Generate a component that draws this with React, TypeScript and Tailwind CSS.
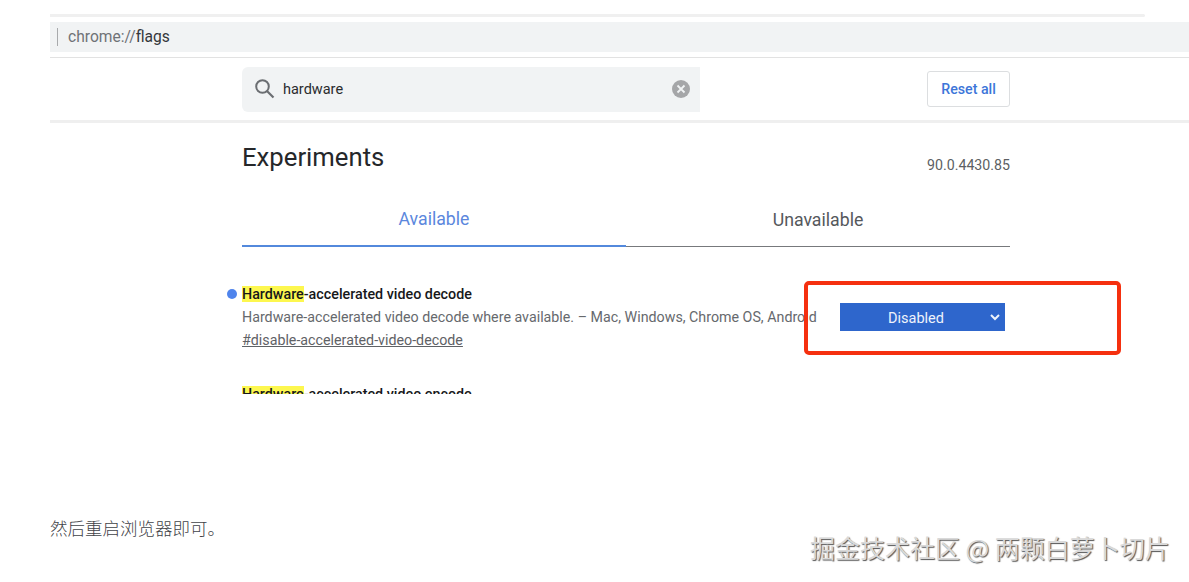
const rowLabel = "font-['Roboto','Liberation_Sans',sans-serif]"

const Highlight = () => <span className="bg-[#fdf74f]">Hardware</span>

export default function App() {
  return (
    <div className={`${rowLabel} relative flex h-[582px] w-[1189px] flex-col overflow-hidden bg-white pl-[50px] pt-[14px]`}>
      {/* browser chrome */}
      <div className="mr-[44px] h-[3px] rounded-r-full bg-[#f0f0f0]" />
      <div className="mt-[5px] flex h-[30px] items-center bg-[#f1f3f4] pl-[7px]">
        <div className="h-[18px] w-px bg-[#a8aaac]" />
        <span className="ml-[10px] pt-[2px] text-[15.6px] text-[#6f7276]">
          chrome://<span className="text-[#34373b]">flags</span>
        </span>
      </div>
      <div className="mt-[5px] h-px bg-[#e2e2e2]" />

      {/* search row */}
      <div className="flex h-[62px] items-center pl-[192px]">
        <div className="flex h-[45px] w-[458px] items-center rounded-l-md bg-[#f1f3f4] pl-[13px] pr-[10px]">
          <svg width="20" height="20" viewBox="0 0 20 20" fill="none" stroke="#6b6e72" strokeWidth="2">
            <circle cx="7.5" cy="7.5" r="6.3" />
            <path d="M12 12l6.5 6.5" strokeWidth="2.2" />
          </svg>
          <span className="ml-[8px] pt-[2px] text-[14.5px] text-[#2a2b2d]">hardware</span>
          <span className="ml-auto flex h-[18px] w-[18px] items-center justify-center rounded-full bg-[#a5a6a8]">
            <svg width="10" height="10" viewBox="0 0 10 10" fill="none" stroke="#f1f3f4" strokeWidth="1.8">
              <path d="M1.5 1.5l7 7M8.5 1.5l-7 7" />
            </svg>
          </span>
        </div>
        <button className="ml-[227px] h-[36px] w-[83px] rounded-[3px] border border-[#dcdee0] bg-white pt-[2px] text-[14.2px] font-medium text-[#3d76d9]">
          Reset all
        </button>
      </div>
      <div className="h-[3px] bg-[#efefef]" />

      {/* main column */}
      <div className="flex w-[960px] flex-col pl-[192px]">
        <div className="flex items-start justify-between pt-[18px]">
          <h1 className="text-[25.7px] leading-[32px] text-[#25272a]">Experiments</h1>
          <span className="pt-[14px] text-[14.2px] leading-[20px] text-[#5c5f63]">90.0.4430.85</span>
        </div>

        <div className="mt-[28px] flex">
          <div className="flex h-[44px] w-[384px] justify-center border-b-2 border-[#5389dc] pt-[4px] text-[17.7px] leading-[24px] text-[#5b87dd]">
            Available
          </div>
          <div className="flex h-[44px] w-[384px] justify-center border-b border-[#77797c] pt-[5px] text-[17.7px] leading-[24px] text-[#55585c]">
            Unavailable
          </div>
        </div>

        <div className="relative mt-[38px] h-[109px]">
          <span className="absolute left-[-15px] top-[4px] h-[10px] w-[10px] rounded-full bg-[#4f84ec]" />
          <div className="h-full overflow-hidden">
            <p className="text-[14.3px] font-medium leading-[18px] text-[#17181a]">
              <Highlight />-accelerated video decode
            </p>
            <p className="mt-[5px] whitespace-nowrap text-[14.25px] leading-[18px] text-[#66696d]">
              Hardware-accelerated video decode where available. – Mac, Windows, Chrome OS, Android
            </p>
            <a className="mt-[5px] block w-fit text-[14.25px] leading-[18px] text-[#5f6266] underline">
              #disable-accelerated-video-decode
            </a>
            <p className="mt-[36px] text-[14.3px] font-medium leading-[18px] text-[#17181a]">
              <Highlight />-accelerated video encode
            </p>
          </div>
        </div>
      </div>

      <p className="mt-[122px] font-['Noto_Sans_CJK_SC',sans-serif] text-[17.5px] font-light leading-[24px] text-[#3f4348]">
        然后重启浏览器即可。
      </p>

      {/* dropdown sits across the description's end */}
      <div className="absolute left-[840px] top-[303px] flex h-[28px] w-[165px] items-center justify-center bg-[#2e66cc] pt-[3px] text-[14.5px] text-[#eef3fb]">
        <span className="mr-[13px]">Disabled</span>
        <svg className="absolute right-[4px] top-[9px]" width="12" height="10" viewBox="0 0 12 10" fill="none" stroke="#eef3fb" strokeWidth="2">
          <path d="M2 3l4 4 4-4" />
        </svg>
      </div>

      {/* red annotation */}
      <div className="absolute left-[804px] top-[281px] h-[74px] w-[317px] rounded-[5px] border-[4px] border-[#f5300f]" />

      {/* watermark */}
      <span className="absolute left-[810px] top-[530px] whitespace-nowrap font-['Noto_Sans_CJK_SC',sans-serif] text-[25px] leading-[34px] text-[#d9d9d9] [text-shadow:1px_1px_1px_#555]">
        掘金技术社区 @ 两颗白萝卜切片
      </span>
    </div>
  )
}
